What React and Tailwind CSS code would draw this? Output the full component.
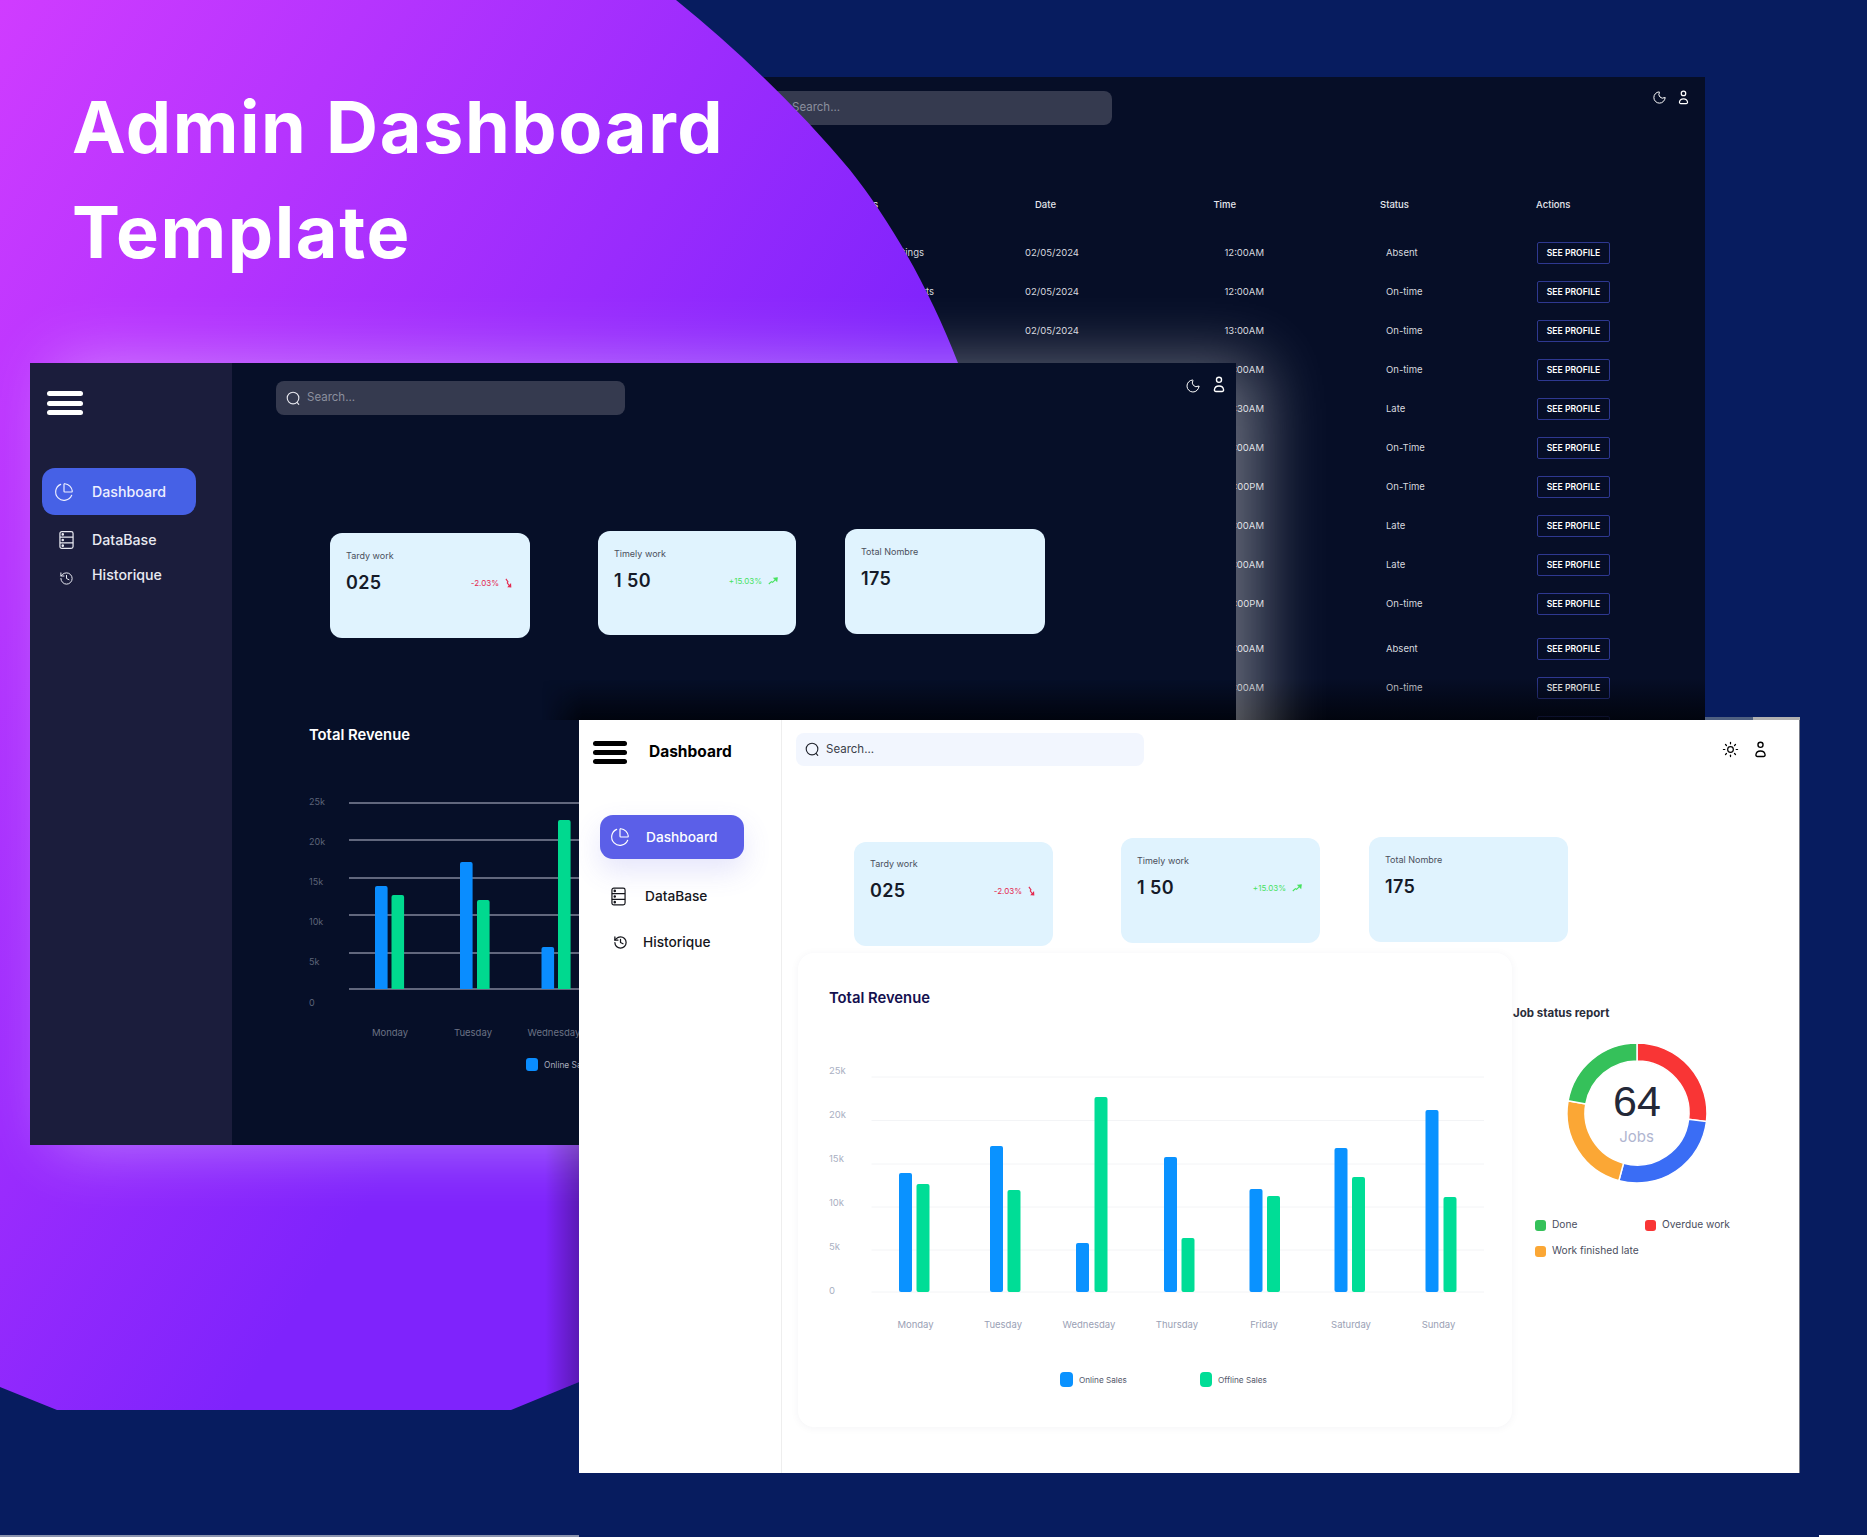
import React from "react";
import { ChartPie, History, Moon, Sun } from "lucide-react";

function SearchIcon({ className }) {
  return (
    <svg viewBox="0 0 16 16" fill="none" stroke="currentColor" strokeWidth="1.2" strokeLinecap="round" className={className}>
      <circle cx="7.5" cy="7.5" r="6.2" />
      <path d="M12 12.4l1.6 1.8" />
    </svg>
  );
}

function DbIcon({ className }) {
  return (
    <svg viewBox="0 0 16 20" fill="none" stroke="currentColor" strokeWidth="1.3" className={className}>
      <rect x="1" y="1" width="14" height="18" rx="2" />
      <path d="M1 7h14M1 13h14" />
      <circle cx="4" cy="4" r="0.7" fill="currentColor" />
      <circle cx="4" cy="10" r="0.7" fill="currentColor" />
      <circle cx="4" cy="16" r="0.7" fill="currentColor" />
    </svg>
  );
}

function UserIcon({ className }) {
  return (
    <svg viewBox="0 0 14 20" fill="none" stroke="currentColor" strokeWidth="1.6" className={className}>
      <circle cx="7" cy="4.5" r="3" />
      <path d="M3.4 18.2h7.2a1.8 1.8 0 0 0 1.8-2c-.4-2.8-2.4-4.4-5.4-4.4s-5 1.6-5.4 4.4a1.8 1.8 0 0 0 1.8 2z" />
    </svg>
  );
}

function ArrowDown() {
  return (
    <svg viewBox="0 0 8 11" width="7" height="10" fill="none" stroke="currentColor" strokeWidth="1.2" className="shrink-0">
      <path d="M1 0.8L3.4 4.2L2.6 5.4L5 8.6" />
      <path d="M3.8 9.8L6.6 10L6.4 7z" fill="currentColor" />
    </svg>
  );
}

function ArrowUp() {
  return (
    <svg viewBox="0 0 10 8" width="10" height="8" fill="none" stroke="currentColor" strokeWidth="1.1" className="shrink-0">
      <path d="M0.8 7L3.4 4.6L4.6 5.4L7.6 2.4" />
      <path d="M6 1.2L9.2 0.8L8.8 4z" fill="currentColor" />
    </svg>
  );
}

function Burger({ bar }) {
  return (
    <div className="flex flex-col justify-between h-full w-full">
      <div className={`h-[5px] rounded-full ${bar}`} />
      <div className={`h-[5px] rounded-full ${bar}`} />
      <div className={`h-[5px] rounded-full ${bar}`} />
    </div>
  );
}

function StatCard({ title, value, delta, up, className }) {
  return (
    <div className={`bg-[#e0f3fe] rounded-xl pl-[16px] pr-[18px] ${className}`}>
      <div className="text-[9px] leading-[12px] text-[#4a4f5c]">{title}</div>
      <div className="flex items-center justify-between mt-[8px] h-[26px]">
        <div className="text-[18px] leading-[26px] font-semibold text-[#151a28] tracking-[0.02em]">{value}</div>
        {delta && (
          <div className={`flex items-center gap-[6px] text-[8px] -mt-[1px] ${up ? "text-[#46e25e]" : "text-[#e4284e]"}`}>
            <span>{delta}</span>
            {up ? <ArrowUp /> : <ArrowDown />}
          </div>
        )}
      </div>
    </div>
  );
}

const rows = [
  ["Team meetings", "12:00AM", "Absent", "pr-[101px]"],
  ["Client reports", "12:00AM", "On-time", "pr-[91px]"],
  ["Weekly review", "13:00AM", "On-time", "pr-[101px]"],
  ["Design sprint", "14:00AM", "On-time", "pr-[101px]"],
  ["Code review", "14:30AM", "Late", "pr-[101px]"],
  ["Data cleanup", "16:00AM", "On-Time", "pr-[101px]"],
  ["Planning", "15:00PM", "On-Time", "pr-[101px]"],
  ["Support desk", "11:00AM", "Late", "pr-[101px]"],
  ["Audit", "12:00AM", "Late", "pr-[101px]"],
  ["Reporting", "18:00PM", "On-time", "pr-[101px]"],
  ["Onboarding", "10:00AM", "Absent", "pr-[101px]"],
  ["Training", "11:00AM", "On-time", "pr-[101px]"],
];

function TableRow({ r, extra }) {
  return (
    <div className={`grid grid-cols-[325px_160px_79px_273px_auto] items-center h-[39px] text-[9.5px] text-[#d6d8df] ${extra || ""}`}>
      <div className={`text-right ${r[3]}`}>{r[0]}</div>
      <div>02/05/2024</div>
      <div className="text-right whitespace-nowrap">{r[1]}</div>
      <div className="pl-[122px]">{r[2]}</div>
      <div className="w-[73px] h-[22px] border border-[#2e3890] rounded-[2px] flex items-center justify-center text-[8.6px] font-semibold text-white whitespace-nowrap -mt-[1px]">
        SEE PROFILE
      </div>
    </div>
  );
}

function BackWindow() {
  return (
    <div className="absolute left-[700px] top-[77px] w-[1005px] h-[643px] bg-[#060e27] overflow-hidden">
      <div className="flex justify-between pt-[14px]">
        <div className="ml-[45px] w-[367px] h-[34px] rounded-lg bg-[#353a4f] flex items-center pl-[47px] text-[11.5px] text-[#8b8f9e]">Search...</div>
        <div className="flex items-center gap-[11px] text-white mr-[16px] h-[12px]">
          <Moon size={15} strokeWidth={1.6} />
          <UserIcon className="w-[11px] h-[15px]" />
        </div>
      </div>
      <div className="grid grid-cols-[325px_160px_79px_273px_auto] items-center h-[39px] mt-[61px] mb-[9px] text-[9.5px] font-medium text-[#e4e6ec]">
        <div className="text-right pr-[147px]">Tasks</div>
        <div className="pl-[10px]">Date</div>
        <div className="text-right pr-[28px]">Time</div>
        <div className="pl-[116px]">Status</div>
        <div className="-ml-[1px]">Actions</div>
      </div>
      {rows.slice(0, 10).map((r, i) => (
        <TableRow key={i} r={r} />
      ))}
      <TableRow r={rows[10]} extra="mt-[6px]" />
      <TableRow r={rows[11]} />
      <div className="ml-[837px] mt-[8px] w-[73px] h-[22px] border border-[#2e3890] rounded-[2px]" />
      <div className="absolute left-0 right-0 bottom-0 h-[42px] bg-gradient-to-b from-transparent to-[#000208]/80" />
    </div>
  );
}

function DarkChart() {
  const lines = [803, 840, 878, 915, 953, 989];
  const labels = [["25k", 805], ["20k", 845], ["15k", 885], ["10k", 925], ["5k", 965], ["0", 1006]];
  const bars = [
    [375, 886, "#0a8dff"], [391.5, 895, "#00d98f"],
    [460, 862, "#0a8dff"], [477, 900, "#00d98f"],
    [541.5, 947, "#0a8dff"], [558, 820, "#00d98f"],
  ];
  return (
    <svg viewBox="309 790 300 300" width="300" height="300" className="mt-[45px] ml-[77px] block">
      {lines.map((y) => (
        <line key={y} x1="349" x2="609" y1={y} y2={y} stroke="#80869a" strokeWidth="1.3" />
      ))}
      {labels.map(([t, y]) => (
        <text key={t} x="309" y={y} fontSize="9" fill="#5d6478">{t}</text>
      ))}
      {bars.map(([x, top, c]) => (
        <path key={x} d={`M${x} 989V${top + 2}a2 2 0 0 1 2-2h8.6a2 2 0 0 1 2 2V989z`} fill={c} />
      ))}
      {[["Monday", 390], ["Tuesday", 473], ["Wednesday", 554]].map(([t, x]) => (
        <text key={t} x={x} y="1036" fontSize="9.5" fill="#6b7285" textAnchor="middle">{t}</text>
      ))}
      <rect x="526" y="1058" width="12" height="13" rx="3" fill="#0a8dff" />
      <text x="544" y="1068" fontSize="8.4" fill="#a6acbc">Online Sales</text>
    </svg>
  );
}

function MidWindow() {
  return (
    <div className="absolute left-[30px] top-[363px] w-[1206px] h-[782px] flex bg-[#060f28] shadow-[25px_0_62px_rgba(255,255,255,0.4)]">
      <aside className="w-[202px] h-full bg-[#1b1d3c] pt-[28px] pl-[12px] text-[#e9eaf2] text-[14.2px]">
        <div className="w-[36px] h-[24px] ml-[5px]"><Burger bar="bg-white" /></div>
        <div className="mt-[53px] w-[154px] h-[47px] rounded-[13px] bg-[#4661e6] flex items-center pl-[12px] gap-[18px] font-medium text-[#eef0ff]">
          <ChartPie size={20} strokeWidth={1.4} />
          <span>Dashboard</span>
        </div>
        <div className="mt-[15px] h-[20px] flex items-center gap-[18px] pl-[17px] font-medium">
          <DbIcon className="w-[15px] h-[20px] shrink-0" />
          <span>DataBase</span>
        </div>
        <div className="mt-[15px] h-[20px] flex items-center gap-[18px] pl-[17px] font-medium">
          <History size={15} strokeWidth={1.6} className="mt-[7px]" />
          <span>Historique</span>
        </div>
      </aside>
      <main className="flex-1 relative overflow-hidden">
        <div className="flex justify-between pt-[18px]">
          <div className="ml-[44px] w-[349px] h-[34px] rounded-lg bg-[#353a4f] flex items-center pl-[10px] gap-[6px] text-[11.5px] text-[#8b8f9e]">
            <SearchIcon className="w-[15px] h-[15px] text-[#e6e7ee]" />
            <span>Search...</span>
          </div>
          <div className="flex items-start gap-[12px] text-white mr-[11px]">
            <Moon size={16} strokeWidth={1.5} className="-mt-[3px]" />
            <UserIcon className="w-[12px] h-[17px] -mt-[5px]" />
          </div>
        </div>
        <div className="flex items-start mt-[114px] ml-[98px]">
          <StatCard title="Tardy work" value="025" delta="-2.03%" className="w-[200px] h-[105px] mt-[4px] pt-[17px]" />
          <StatCard title="Timely work" value={<><span className="mr-[5px]">1</span>50</>} delta="+15.03%" up className="w-[198px] h-[104px] mt-[2px] ml-[68px] pt-[17px]" />
          <StatCard title="Total Nombre" value="175" className="w-[200px] h-[105px] ml-[49px] pt-[17px]" />
        </div>
        <div className="mt-[87px] ml-[77px] text-[14.8px] leading-[20px] font-semibold text-white">Total Revenue</div>
        <DarkChart />
        <div className="absolute left-[310px] right-0 top-[317px] h-[40px] bg-gradient-to-b from-transparent to-[#000208]/80 [mask-image:linear-gradient(to_right,transparent,black_40px)]" />
      </main>
    </div>
  );
}

function LightChart() {
  const lines = [1077, 1120.5, 1164, 1207, 1250, 1292];
  const labels = [["25k", 1074], ["20k", 1118], ["15k", 1162], ["10k", 1206], ["5k", 1250], ["0", 1294]];
  const bars = [
    [899, 1173, 916.5, 1184],
    [990, 1146, 1007.5, 1190],
    [1076, 1243, 1094.5, 1097],
    [1164, 1157, 1181.5, 1238],
    [1249.5, 1189, 1267, 1196],
    [1334.5, 1148, 1352, 1177],
    [1425.5, 1110, 1443.5, 1197],
  ];
  const days = [["Monday", 915.5], ["Tuesday", 1003], ["Wednesday", 1089], ["Thursday", 1177], ["Friday", 1264], ["Saturday", 1351], ["Sunday", 1438.5]];
  const bar = (x, top, c) => (
    <path key={x} d={`M${x} 1290V${top + 2}a2 2 0 0 1 2-2h9a2 2 0 0 1 2 2V1290a2 2 0 0 1-2 2h-9a2 2 0 0 1-2-2z`} fill={c} />
  );
  return (
    <svg viewBox="829 1050 680 350" width="680" height="350" className="mt-[42px] block">
      {lines.map((y) => (
        <line key={y} x1="871.5" x2="1484" y1={y} y2={y} stroke="#f3f4f6" strokeWidth="1" />
      ))}
      {labels.map(([t, y]) => (
        <text key={t} x="829" y={y} fontSize="9.5" fill="#a9afc2">{t}</text>
      ))}
      {bars.map((b) => (
        <g key={b[0]}>
          {bar(b[0], b[1], "#0a92ff")}
          {bar(b[2], b[3], "#00dd96")}
        </g>
      ))}
      {days.map(([t, x]) => (
        <text key={t} x={x} y="1328" fontSize="9.5" fill="#9aa1b5" textAnchor="middle">{t}</text>
      ))}
      <rect x="1060" y="1372" width="13" height="15" rx="4" fill="#0a92ff" />
      <text x="1079" y="1383" fontSize="8.2" fill="#53586a">Online Sales</text>
      <rect x="1200" y="1372" width="12" height="15" rx="4" fill="#00dd96" />
      <text x="1218" y="1383" fontSize="8.2" fill="#53586a">Offline Sales</text>
    </svg>
  );
}

function seg(a0, a1) {
  const R = 70, r = 52, c = 75;
  const p = (rad, a) => {
    const t = (a * Math.PI) / 180;
    return `${(c + rad * Math.sin(t)).toFixed(2)} ${(c - rad * Math.cos(t)).toFixed(2)}`;
  };
  const large = a1 - a0 > 180 ? 1 : 0;
  return `M${p(R, a0)}A${R} ${R} 0 ${large} 1 ${p(R, a1)}L${p(r, a1)}A${r} ${r} 0 ${large} 0 ${p(r, a0)}Z`;
}

function Donut() {
  return (
    <svg viewBox="0 0 150 150" width="150" height="150" className="block mt-[15px] ml-[50px]">
      <path d={seg(0, 97)} fill="#f93535" stroke="#fff" strokeWidth="1.5" />
      <path d={seg(97, 195)} fill="#3a6df5" stroke="#fff" strokeWidth="1.5" />
      <path d={seg(195, 280)} fill="#fba735" stroke="#fff" strokeWidth="1.5" />
      <path d={seg(280, 360)} fill="#35c15a" stroke="#fff" strokeWidth="1.5" />
      <text x="75" y="78" textAnchor="middle" fontSize="43" fill="#232838" style={{ fontFamily: "'Liberation Sans', sans-serif" }}>64</text>
      <text x="74.5" y="104" textAnchor="middle" fontSize="15" fill="#b0b5d0">Jobs</text>
    </svg>
  );
}

function Legend({ color, children }) {
  return (
    <div className="flex items-center gap-[6px] h-[14px] text-[10.2px] text-[#4a4e5e] whitespace-nowrap">
      <span className={`w-[11px] h-[11px] rounded-[3px] ${color}`} />
      <span>{children}</span>
    </div>
  );
}

function LightWindow() {
  return (
    <div className="absolute left-[579px] top-[720px] w-[1221px] h-[753px] bg-white border-r border-[#777b88] flex">
      <aside className="w-[203px] h-full border-r border-[#eeeeee] pt-[21px] pl-[14px] text-[13.7px]">
        <div className="flex items-center">
          <div className="w-[34px] h-[23px]"><Burger bar="bg-black" /></div>
          <div className="ml-[22px] text-[15.5px] font-bold text-black -mt-[2px]">Dashboard</div>
        </div>
        <div className="mt-[51px] ml-[7px] w-[144px] h-[44px] rounded-[13px] bg-[#5b5fe8] flex items-center pl-[10px] gap-[16px] font-medium text-white shadow-[0_12px_28px_rgba(91,95,232,0.16)]">
          <ChartPie size={20} strokeWidth={1.4} />
          <span>Dashboard</span>
        </div>
        <div className="mt-[27px] h-[20px] flex items-center gap-[19px] pl-[18px] font-medium text-[#15161c]">
          <DbIcon className="w-[15px] h-[19px] shrink-0" />
          <span>DataBase</span>
        </div>
        <div className="mt-[26px] h-[20px] flex items-center gap-[15px] pl-[20px] font-medium text-[#15161c]">
          <History size={15} strokeWidth={2} />
          <span>Historique</span>
        </div>
      </aside>
      <main className="flex-1 min-w-0">
        <div className="flex justify-between pt-[13px]">
          <div className="ml-[14px] w-[348px] h-[33px] rounded-lg bg-[#f2f6fe] flex items-center pl-[9px] gap-[6px] text-[11.5px] text-[#3b3f4a]">
            <SearchIcon className="w-[15px] h-[15px] text-[#22252e]" />
            <span>Search...</span>
          </div>
          <div className="flex items-center gap-[15px] text-black mr-[32px] h-[33px]">
            <Sun size={17} strokeWidth={1.7} />
            <UserIcon className="w-[13px] h-[17px]" />
          </div>
        </div>
        <div className="flex items-start mt-[71px] ml-[72px]">
          <StatCard title="Tardy work" value="025" delta="-2.03%" className="w-[199px] h-[104px] mt-[5px] pt-[16px]" />
          <StatCard title="Timely work" value={<><span className="mr-[5px]">1</span>50</>} delta="+15.03%" up className="w-[199px] h-[105px] mt-[1px] ml-[68px] pt-[17px]" />
          <StatCard title="Total Nombre" value="175" className="w-[199px] h-[105px] ml-[49px] pt-[17px]" />
        </div>
        <div className="flex mt-[7px] ml-[16px]">
          <div className="w-[714px] h-[474px] rounded-2xl bg-white shadow-[0_1px_8px_rgba(30,40,70,0.05)] pl-[31px] pt-[35px] shrink-0">
            <div className="text-[14.8px] leading-[20px] font-semibold text-[#14104f]">Total Revenue</div>
            <LightChart />
          </div>
          <div className="flex-1 min-w-0">
            <div className="mt-[50px] pl-[1px] text-[11.5px] leading-[20px] font-bold text-[#2a2d3a]">Job status report</div>
            <Donut />
            <div className="ml-[23px] mt-[30px] grid grid-cols-[110px_auto] gap-y-[12px] justify-start">
              <Legend color="bg-[#35c15a]">Done</Legend>
              <Legend color="bg-[#f93535]">Overdue work</Legend>
              <Legend color="bg-[#fba735]">Work finished late</Legend>
            </div>
          </div>
        </div>
      </main>
    </div>
  );
}

function PurpleShape() {
  const d = "M0 0L676 0C740 52 800 110 850 170C890 220 930 290 958 363L958 1145L600 1145L600 1370L579 1382L511 1410L57 1410L0 1387Z";
  return (
    <svg viewBox="0 0 1867 1537" width="1867" height="1537" className="absolute left-0 top-0 block">
      <defs>
        <linearGradient id="purple" gradientUnits="userSpaceOnUse" x1="0" y1="0" x2="810" y2="531">
          <stop offset="0" stopColor="#d03cff" />
          <stop offset="1" stopColor="#7f23fc" />
        </linearGradient>
        <linearGradient id="edge" gradientUnits="userSpaceOnUse" x1="545" y1="0" x2="579" y2="0">
          <stop offset="0" stopColor="#000" stopOpacity="0" />
          <stop offset="1" stopColor="#000" stopOpacity="0.28" />
        </linearGradient>
        <clipPath id="shape"><path d={d} /></clipPath>
      </defs>
      <path d={d} fill="url(#purple)" />
      <rect x="545" y="1145" width="34" height="265" fill="url(#edge)" clipPath="url(#shape)" />
    </svg>
  );
}

export default function App() {
  return (
    <div className="relative w-[1867px] h-[1537px] overflow-hidden bg-[#071c5f] font-['Inter',sans-serif]">
      <BackWindow />
      <PurpleShape />
      <h1 className="absolute left-[72px] top-[74px] text-[72px] leading-[105px] font-bold text-white tracking-[0.022em]">
        Admin Dashboard<br />Template
      </h1>
      <MidWindow />
      <div className="absolute left-[1705px] top-[717px] w-[48px] h-[3px] bg-[#4f6080]" />
      <div className="absolute left-[1753px] top-[717px] w-[47px] h-[3px] bg-[#b0b0b0]" />
      <LightWindow />
      <div className="absolute left-0 top-[1535px] w-[579px] h-[2px] bg-[#8a93ad]" />
      <div className="absolute left-[1819px] top-[1535px] w-[48px] h-[2px] bg-white" />
    </div>
  );
}
